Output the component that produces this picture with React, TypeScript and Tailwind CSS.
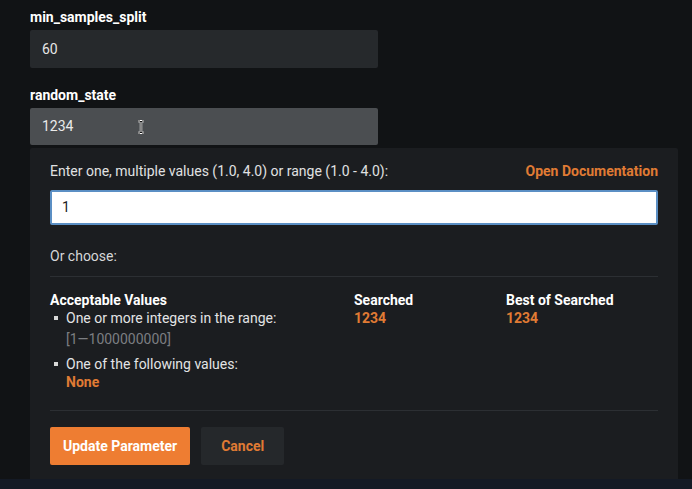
export default function App() {
  return (
    <div
      className="flex h-[489px] w-[692px] flex-col overflow-hidden bg-[#111315] text-[14px] text-[#e3e4e5]"
      style={{ fontFamily: "Roboto, 'Liberation Sans', sans-serif" }}
    >
      <div className="flex flex-1 flex-col pl-[30px] pr-[14px] pt-[8px]">
        <label className="text-[14px] font-bold leading-[18px] text-white">min_samples_split</label>
        <div className="mt-[4px] flex h-[38px] w-[348px] items-center rounded-[2px] bg-[#26292c] px-[12px] text-[#e6e6e6]">60</div>
        <label className="mt-[18px] text-[14px] font-bold leading-[18px] text-white">random_state</label>
        <div className="relative mt-[4px] flex h-[37px] w-[348px] items-center rounded-[2px] bg-[#4b4e51] px-[12px] text-[#eaeaea]">
          1234
          <span className="absolute left-[107px] top-[12px] h-[14px] w-[8px]">
            <svg viewBox="0 0 8 14" width="8" height="14">
              <path d="M1 1h2l1 1 1-1h2M4 2v10M1 13h2l1-1 1 1h2" fill="none" stroke="#fff" strokeWidth="2.4" />
              <path d="M1 1h2l1 1 1-1h2M4 2v10M1 13h2l1-1 1 1h2" fill="none" stroke="#111" strokeWidth="1" />
            </svg>
          </span>
        </div>
        <div className="mt-[3px] flex flex-1 flex-col rounded-t-[2px] bg-[#1b1d20] px-[20px] pt-[14px]">
          <div className="flex items-center justify-between leading-[18px]">
            <span className="text-[#e0e1e2]">Enter one, multiple values (1.0, 4.0) or range (1.0 - 4.0):</span>
            <span className="font-bold text-[#e07b34]">Open Documentation</span>
          </div>
          <div className="mt-[10px] flex h-[35px] items-center rounded-[2px] border-2 border-[#5b8fc4] bg-white px-[10px] text-[#222]">1</div>
          <div className="mt-[22px] leading-[18px] text-[#d6d7d8]">Or choose:</div>
          <div className="mt-[11px] h-px bg-[#2c2f33]" />
          <div className="mt-[14px] flex">
            <div className="w-[304px]">
              <div className="font-bold leading-[18px] text-white">Acceptable Values</div>
              <ul>
                <li className="flex">
                  <span className="ml-[4px] mr-[8px] mt-[7px] h-[4px] w-[4px] bg-[#d8d8d8]" />
                  <div className="leading-[18px]">
                    <div>One or more integers in the range:</div>
                    <div className="mt-[3px] text-[#7b7e82]">[1—1000000000]</div>
                  </div>
                </li>
                <li className="mt-[7px] flex">
                  <span className="ml-[4px] mr-[8px] mt-[7px] h-[4px] w-[4px] bg-[#d8d8d8]" />
                  <div className="leading-[18px]">
                    <div>One of the following values:</div>
                    <div className="font-bold text-[#e07b34]">None</div>
                  </div>
                </li>
              </ul>
            </div>
            <div className="w-[152px]">
              <div className="font-bold leading-[18px] text-white">Searched</div>
              <div className="font-bold leading-[18px] text-[#e07b34]">1234</div>
            </div>
            <div>
              <div className="font-bold leading-[18px] text-white">Best of Searched</div>
              <div className="font-bold leading-[18px] text-[#e07b34]">1234</div>
            </div>
          </div>
          <div className="mt-[19px] h-px bg-[#2c2f33]" />
          <div className="mt-[16px] flex gap-[11px]">
            <button className="h-[38px] rounded-[2px] bg-[#ee7d32] px-[13px] font-bold text-white">Update Parameter</button>
            <button className="h-[38px] rounded-[2px] bg-[#25282b] px-[20px] font-bold text-[#e07b34]">Cancel</button>
          </div>
        </div>
      </div>
      <div className="h-[10px] bg-[#141a25]" />
    </div>
  );
}
